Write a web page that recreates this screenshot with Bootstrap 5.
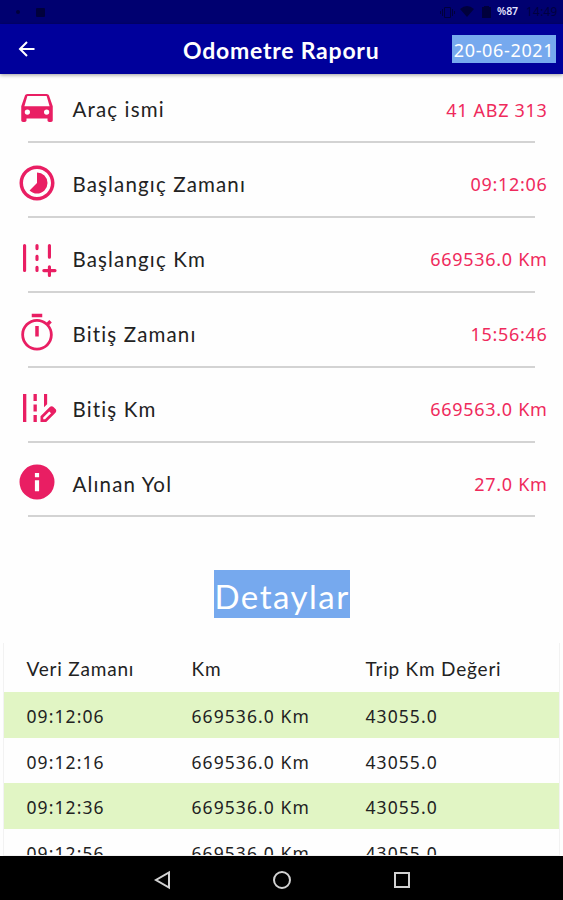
<!DOCTYPE html>
<html lang="tr">
<head>
<meta charset="utf-8">
<meta name="viewport" content="width=device-width, initial-scale=1">
<title>Odometre Raporu</title>
<link href="https://cdn.jsdelivr.net/npm/bootstrap@5.3.0/dist/css/bootstrap.min.css" rel="stylesheet">
<style>
body{font-family:"Noto Sans","Open Sans",sans-serif;color:#222;background:#fefefe}
.app-screen{height:900px;overflow:hidden}
.status-bar{height:24px;background:#000070;color:#00003f;font-size:11px}
.status-bar svg{fill:#00003c}
.battery-text{color:#e4e4ff;font-weight:600;font-size:10.5px;letter-spacing:-.1px}
.clock-text{width:37px;font-size:12px;letter-spacing:.2px}
.title-bar{height:50px;background:#00009b;box-shadow:0 1px 4px rgba(0,0,0,.4);display:grid;grid-template-columns:183px 1fr 111px}
.page-title{font-family:Lato,sans-serif;font-size:23px;font-weight:700;line-height:28px;letter-spacing:.77px;padding-top:2px}
.date-chip{background:#76a9ee;height:28px;width:104px;font-size:18px;line-height:31px;letter-spacing:.65px}
.info-row{height:74.9px;padding:0 15.5px 13.500px 15.5px}
.info-row:first-child{height:68px}
.row-body{height:37px}
.row-icon{width:42px;height:42px;margin-top:-4px;fill:#e91e63}
.row-label{font-family:Lato,sans-serif;font-size:20.5px;letter-spacing:1.15px;margin:-1px 0 0 15px}
.row-value{font-size:18px;letter-spacing:.7px;color:#ef2a5c}
.divider{height:2px;margin:-1px 28px -1px;background:#d3d3d3}
.details-title{font-family:Lato,sans-serif;font-size:33px;line-height:53px;width:136px;height:48px;margin:53.5px auto 0;background:#76a9ee;letter-spacing:1.5px;padding-left:1px}
.data-grid{margin:25px 3px 0 3px;border:1px solid #f2f2f2;border-top:0;height:213px;overflow:hidden;font-size:17.5px;letter-spacing:1.08px}
.data-line{display:grid;grid-template-columns:165px 174px 1fr;padding:3px 0 0 22.5px;height:45px;align-items:center}
.data-line.head-line{height:49px;font-family:Lato,sans-serif;font-size:19px;letter-spacing:.8px;padding-top:3px}
.data-line.shade{background:#e1f5c4;height:46px}
.nav-keys{height:44px;background:#000}
.nav-keys svg{fill:none;stroke:#d2d2d2;stroke-width:2}
.nav-keys .key-slot{width:120px}
</style>
<script src="https://cdn.jsdelivr.net/npm/bootstrap@5.3.0/dist/js/bootstrap.bundle.min.js"></script>
</head>
<body>
<div class="app-screen d-flex flex-column">
  <div class="status-bar d-flex align-items-center justify-content-between flex-shrink-0">
    <svg width="60" height="24"><circle cx="18" cy="12" r="2"/><rect x="36" y="8" width="9" height="9" rx="1"/></svg>
    <div class="d-flex align-items-center">
      <svg width="60" height="24" viewBox="0 0 60 24"><path d="M7.500 7.500h6v10h-6zM5.500 9v7M15.500 9v7M3.500 11v3M17.500 11v3" style="fill:none" stroke="#00003c"/><path d="M23 9q7-6 14 0l-7 8z"/><path d="M45 7h2V6h5v1h2v11h-9z"/></svg>
      <span class="battery-text">%87</span>
      <span class="clock-text ms-2">14:49</span>
    </div>
  </div>
  <header class="title-bar align-items-center flex-shrink-0 text-white position-relative">
    <svg width="24" height="24" viewBox="0 0 24 24" class="ms-3" fill="none" stroke="#fff" stroke-width="2"><path d="M18.500 12H4.500M11 5l-7 7 7 7"/></svg>
    <div class="page-title text-nowrap">Odometre Raporu</div>
    <div class="date-chip text-center text-nowrap">20-06-2021</div>
  </header>

  <div class="info-list flex-shrink-0">
    <div class="info-row d-flex align-items-end"><div class="row-body d-flex align-items-center w-100">
      <svg class="row-icon" viewBox="0 0 24 24"><path d="M18.920 5.010C18.720 4.420 18.160 4 17.500 4h-11c-.660 0-1.210.420-1.420 1.010L3 11v8c0 .550.450 1 1 1h1c.550 0 1-.450 1-1v-1h12v1c0 .550.450 1 1 1h1c.550 0 1-.450 1-1v-8zM6.500 15.800a1.500 1.500 0 1 1 0-3 1.500 1.500 0 0 1 0 3zm11 0a1.500 1.500 0 1 1 0-3 1.500 1.500 0 0 1 0 3zM4.800 11l1.700-5.900h11L19.200 11z"/></svg>
      <span class="row-label">Araç ismi</span><span class="row-value ms-auto">41 ABZ 313</span></div></div>
    <div class="divider"></div>
    <div class="info-row d-flex align-items-end"><div class="row-body d-flex align-items-center w-100">
      <svg class="row-icon" viewBox="0 0 24 24"><path d="M16.240 7.760A5.974 5.974 0 0 0 12 6v6l-4.240 4.240c2.340 2.340 6.140 2.340 8.490 0a5.990 5.990 0 0 0-.010-8.480zM12 2C6.480 2 2 6.480 2 12s4.480 10 10 10 10-4.480 10-10S17.520 2 12 2zm0 18c-4.420 0-8-3.580-8-8s3.580-8 8-8 8 3.580 8 8-3.580 8-8 8z"/></svg>
      <span class="row-label">Başlangıç Zamanı</span><span class="row-value ms-auto">09:12:06</span></div></div>
    <div class="divider"></div>
    <div class="info-row d-flex align-items-end"><div class="row-body d-flex align-items-center w-100">
      <svg class="row-icon" viewBox="0 0 24 24"><g fill="none" stroke="#e91e63" stroke-width="1.800" stroke-linecap="round"><path d="M4.900 4.900v14.200M12 4.900v1.700M12 11v1.800M12 17.300v1.800M19.100 4.900v6.600M19.100 17v5M15.900 19.200h6.400"/></g></svg>
      <span class="row-label">Başlangıç Km</span><span class="row-value ms-auto">669536.0 Km</span></div></div>
    <div class="divider"></div>
    <div class="info-row d-flex align-items-end"><div class="row-body d-flex align-items-center w-100">
      <svg class="row-icon" viewBox="0 0 24 24"><path d="M15 1H9v2h6V1zm-4 13h2V8h-2v6zm8.030-6.610l1.420-1.420c-.430-.510-.900-.990-1.410-1.410l-1.420 1.420C16.070 4.740 14.120 4 12 4c-4.970 0-9 4.030-9 9s4.020 9 9 9 9-4.030 9-9c0-2.120-.740-4.070-1.970-5.610zM12 20.400a7.400 7.400 0 1 1 0-14.800 7.400 7.400 0 0 1 0 14.800z"/></svg>
      <span class="row-label">Bitiş Zamanı</span><span class="row-value ms-auto">15:56:46</span></div></div>
    <div class="divider"></div>
    <div class="info-row d-flex align-items-end"><div class="row-body d-flex align-items-center w-100">
      <svg class="row-icon" viewBox="0 0 24 24"><path d="M17.800 4h-1.800v7.600l1.800-1.800zM4 4h1.900v16H4zM10 4h1.900v4H10zM10 10h1.900v4H10zM10 16h1.900v4H10zM22.560 12.590l-1.150-1.150c-.590-.590-1.540-.590-2.120 0L14 16.730V20h3.270l5.290-5.290c.590-.590.590-1.540 0-2.120zM16.580 18.450h-1.030v-1.030L19 13.970l1.030 1.030z"/></svg>
      <span class="row-label">Bitiş Km</span><span class="row-value ms-auto">669563.0 Km</span></div></div>
    <div class="divider"></div>
    <div class="info-row d-flex align-items-end"><div class="row-body d-flex align-items-center w-100">
      <svg class="row-icon" viewBox="0 0 24 24"><path d="M12 2a10 10 0 1 0 0 20 10 10 0 0 0 0-20zm1.200 15.300h-2.400v-6.300h2.400zm0-8h-2.400V6.900h2.400z"/></svg>
      <span class="row-label">Alınan Yol</span><span class="row-value ms-auto">27.0 Km</span></div></div>
    <div class="divider"></div>
  </div>

  <h2 class="details-title text-white text-center text-nowrap fw-normal flex-shrink-0">Detaylar</h2>

  <div class="data-grid flex-shrink-0">
    <div class="data-line head-line"><span>Veri Zamanı</span><span>Km</span><span>Trip Km Değeri</span></div>
    <div class="data-line shade"><span>09:12:06</span><span>669536.0 Km</span><span>43055.0</span></div>
    <div class="data-line"><span>09:12:16</span><span>669536.0 Km</span><span>43055.0</span></div>
    <div class="data-line shade"><span>09:12:36</span><span>669536.0 Km</span><span>43055.0</span></div>
    <div class="data-line"><span>09:12:56</span><span>669536.0 Km</span><span>43055.0</span></div>
  </div>

  <nav class="nav-keys d-flex justify-content-center align-items-center mt-auto flex-shrink-0">
    <div class="key-slot text-center"><svg width="20" height="20"><path d="M17 2.500v15L4 10z"/></svg></div>
    <div class="key-slot text-center"><svg width="20" height="20"><circle cx="10" cy="10" r="8"/></svg></div>
    <div class="key-slot text-center"><svg width="20" height="20"><rect x="3" y="3" width="14" height="14"/></svg></div>
  </nav>
</div>
</body>
</html>
